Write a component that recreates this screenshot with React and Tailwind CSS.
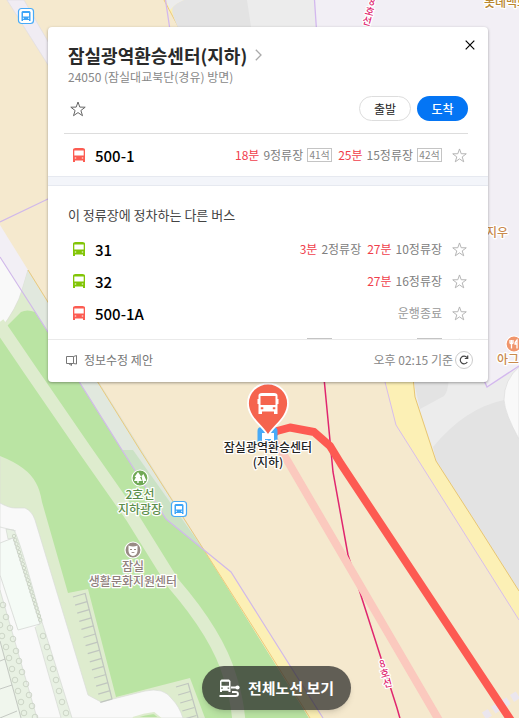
import React from "react";

function BusIcon({ className }) {
  return (
    <svg viewBox="0 0 12 14" className={className} fill="currentColor" aria-hidden="true">
      <path
        fillRule="evenodd"
        d="M2.500 0h7Q12 .4 12 1.500V14H10v-1.600H2V14H0V1.500Q0 .4 2.500 0ZM1.300 2.600V7.600h9.400V2.600ZM1.800 9.500v1.100h1.400V9.500Zm7 0v1.100h1.400V9.500Z"
      />
    </svg>
  );
}

function StarIcon({ className }) {
  return (
    <svg viewBox="0 0 16 16" className={className} fill="none" stroke="currentColor" aria-hidden="true">
      <path d="M8 1l1.800 5.100 5.400.1-4.300 3.300 1.600 5.200L8 11.600l-4.500 3.100 1.600-5.200L.8 6.200l5.400-.1z" />
    </svg>
  );
}

function SeatTag({ children }) {
  return (
    <span className="ml-1 flex h-[14px] w-[25px] items-center justify-center border border-[#c4c4c4] text-[10px] leading-3 text-[#888]">
      {children}
    </span>
  );
}

function Arrival({ time, stops, seats }) {
  return (
    <span className="ml-1.5 flex items-center">
      <span className="text-[#f0404c]">{time}</span>
      <span className="ml-1 text-[#808080]">{stops}</span>
      {seats && <SeatTag>{seats}</SeatTag>}
    </span>
  );
}

function BusRow({ name, color, arrivals, note }) {
  return (
    <li className="flex h-8 items-center pr-[21px] pl-[25px]">
      <BusIcon className={"h-[14px] w-3 " + color} />
      <a href="#bus" className="ml-2.5 pt-0.5 text-[15px] leading-5 font-medium text-black">
        {name}
      </a>
      <div className="ml-auto flex items-center text-xs leading-4">
        {arrivals && arrivals.map((a) => <Arrival key={a.time} {...a} />)}
        {note && <span className="text-[#999]">{note}</span>}
      </div>
      <button type="button" aria-label={name + " 즐겨찾기"} className="ml-2.5 text-[#b0b0b0]">
        <StarIcon className="size-[15px]" />
      </button>
    </li>
  );
}

const otherBuses = [
  {
    name: "31",
    color: "text-[#82c507]",
    arrivals: [
      { time: "3분", stops: "2정류장" },
      { time: "27분", stops: "10정류장" },
    ],
  },
  { name: "32", color: "text-[#82c507]", arrivals: [{ time: "27분", stops: "16정류장" }] },
  { name: "500-1A", color: "text-[#fc5c52]", note: "운행종료" },
];

const parkingTicks = Array.from({ length: 14 }, (_, i) => i);
const lowerTicks = [0, 1, 2, 3, 4];
const trees = [
  [43, 636], [47, 647], [50, 658], [53, 669], [56, 680], [59, 691], [62, 702], [66, 713],
  [3, 605], [6, 617], [10, 628], [13, 639], [16, 651], [19, 661], [22, 672], [26, 684], [29, 695], [32, 706], [35, 717],
  [0, 625], [2, 636], [6, 647], [9, 658], [12, 669], [15, 680], [18, 691], [21, 702], [24, 713],
];
const hedge = Array.from({ length: 22 }, (_, i) => i);

function StopBadge({ x, y }) {
  return (
    <g transform={`translate(${x} ${y})`}>
      <rect x="0.500" y="0.500" width="15" height="15" rx="3" fill="#fff" stroke="#47aaf7" strokeWidth="1.200" />
      <path
        fill="#3da4f7"
        fillRule="evenodd"
        d="M4.500 3h7l1 1v9H11v-1H5v1H3.500V4ZM5 5v3.500h6V5ZM4.800 9.800v1h1.200v-1Zm5.200 0v1h1.200v-1Z"
      />
    </g>
  );
}

function MapLabel({ x, y, fill, lines, size = 12, step = 15, anchor = "middle" }) {
  return (
    <text
      y={y}
      fill={fill}
      fontSize={size}
      fontWeight="500"
      textAnchor={anchor}
      stroke="#fff"
      strokeWidth="2.500"
      strokeLinejoin="round"
      paintOrder="stroke"
    >
      {lines.map((line, i) => (
        <tspan key={line} x={x} dy={i ? step : 0}>
          {line}
        </tspan>
      ))}
    </text>
  );
}

function MapCanvas() {
  return (
    <svg
      viewBox="0 0 519 718"
      preserveAspectRatio="xMidYMin slice"
      className="absolute inset-0 h-full w-full"
      role="img"
      aria-label="지도"
    >
      <rect width="519" height="718" fill="#f5e9ce" />
      {/* north-west road */}
      <path d="M7 0H24L50 45V68Z" fill="#f0ecf3" stroke="#dfdce2" strokeWidth="0.700" />
      {/* blocks along the north edge */}
      <path d="M164 0H190V30H180Z" fill="#fcf0b5" />
      <path d="M164 0L180 30" stroke="#ecca7c" />
      <path d="M166 0H316V40H183C176 22 170 12 173 7Q176 3 184 0Z" fill="#e3e3e3" />
      <path d="M166 0H184Q176 3 172 8L170 10Z" fill="#ececec" />
      <path d="M247 0H316V40H253Z" fill="#ececec" />
      <path d="M315 0H519V440H440V200L316 40Z" fill="#f2eff5" />
      <path d="M165.500 0L170 30M314.500 0L316.500 30" fill="none" stroke="#d3b8ee" strokeWidth="1.300" />

      {/* east blocks */}
      <path d="M413 378L415 397 436 461 519 591V367L487 387 480 370Z" fill="#ececec" />
      <path d="M449 378Q448 392 444 396L420 409 413 378Z" fill="#e3e3e3" />
      <path d="M433 447Q465 408 504 400Q505 414 519 439V595L474 523 436 461Z" fill="#e3e3e3" />
      <path d="M519 367Q504 380 504 400Q505 414 519 439Z" fill="#f9f9f9" stroke="#dcdcdc" strokeWidth="0.700" />
      <path d="M483 378L487 387 519 366" fill="none" stroke="#d3b8ee" strokeWidth="1.400" />
      <path d="M384 378L396 425 456 520 519 620V591L474 520 436 461 415 397 413 378Z" fill="#fcf0b5" />
      <path d="M384 378L396 425 456 520 519 620" fill="none" stroke="#d7bdec" />
      <path d="M413 378L415 397 436 461 474 520 519 591" fill="none" stroke="#e8c673" />

      {/* west park */}
      <path d="M0 225L28 270 20 300H0Z" fill="#f2eff5" />
      <path d="M0 257L22 290Q17 308 0 330Z" fill="#f9f9f9" />
      <path d="M22 290Q17 308 0 330V718H309L204 550 28 270Z" fill="#deecce" stroke="#d8dbd6" strokeWidth="0.600" />
      <path
        d="M0 337V456Q28 467 36 483Q40 490 42 502L68 593 88 589 116 697 190 678 205 718H309L204 550 166 519 122 450 48 332 35 312Q27 309 21 312L8 325Z"
        fill="#bae4a3"
      />
      <path d="M-2 323L30 370 85 450 132 517 173 583Q218 635 230 677Q237 698 239 722" fill="none" stroke="#deecce" strokeWidth="13" strokeLinejoin="round" />
      <path d="M28 270L140 450 204 550 166 519 122 450 22 291Z" fill="#e1e8de" />
      <path d="M122 450L166 519 204 550 133 450Z" fill="#cbe2c5" />
      <path d="M204 550L231 572 323 718H309Z" fill="#fcf0b5" />
      <path d="M28 270L140 450 204 550 260 638 310 718" fill="none" stroke="#ecca7c" />
      <path d="M0 257L48 332 122 450 166 519 204 550 231 572 260 618 323 718M0 222L50 198" fill="none" stroke="#d0b8ea" strokeWidth="1.200" />

      {/* south-west streets */}
      <path
        d="M0 503Q9 508 15 508H25Q32 511 35 520L88 695 101 702 145 691Q164 687 172 699Q179 706 183 718H0Z"
        fill="#f9f9f9"
        stroke="#dadcd8"
        strokeWidth="0.700"
      />
      <path d="M133 718Q144 714 154 713L160 718Z" fill="#bae4a3" stroke="#deecce" strokeWidth="2" />
      <path d="M0 590L37 718H0Z" fill="#e8f1e3" />
      <path d="M35 627L42 622 72 718H61Z" fill="#e8f1e3" />
      <path d="M6 529L14 530Q20 540 42 622L38 625 13 538 8 539Z" fill="#e8f1e3" stroke="#cfd5cc" strokeWidth="0.600" />
      <path d="M0 543L13 538 40 624 18 630 0 575Z" fill="#f5fbf6" stroke="#d5d8d4" strokeWidth="0.800" />
      <path d="M0 590L37 718M35 627L61 718M42 622L72 718M0 527L16 531" fill="none" stroke="#d5d8d4" strokeWidth="0.700" />
      <g fill="none" stroke="#c9d3c4" strokeWidth="0.900">
        {trees.map(([x, y]) => (
          <circle key={x + "-" + y} cx={x} cy={y} r="2.800" />
        ))}
        {hedge.map((i) => (
          <circle key={i} cx={14 + i * 1.25} cy={536 + i * 4} r="1.700" />
        ))}
      </g>
      <path d="M0 641L21 718H0Z" fill="#f0f6ed" />
      <path d="M0 641L21 718M0 661L5 659M0 689L12 685M0 718L17 711" fill="none" stroke="#b9bdb7" strokeWidth="0.800" />
      <g fill="none" stroke="#c0c6bf" strokeWidth="1.200">
        <path d="M85 593L112 699M188 683L198 718" />
        {parkingTicks.map((i) => (
          <path key={i} d={`M${73 + i * 2.1} ${597 + i * 8.1}l12 -3.500`} />
        ))}
        {lowerTicks.map((i) => (
          <path key={i} d={`M${176 + i * 2.1} ${687 + i * 8}l12 -3.500`} />
        ))}
      </g>

      {/* crossing, subway and bus lines */}
      <path d="M484 716L524 691" fill="none" stroke="#ebe6ee" strokeWidth="8" strokeDasharray="7 4" />
      <path d="M324 378L333 472 348 555 381 658 397 708 401 722" fill="none" stroke="#e0266f" strokeWidth="1.500" />
      <path d="M269 432L287 460 440 722" fill="none" stroke="#fbc9be" strokeWidth="8" />
      <path d="M268 437L277 431 290 427.500 314 432 330 446 341 464 512 722" fill="none" stroke="#fd5a52" strokeWidth="8" strokeLinejoin="round" />

      {/* transit stops */}
      <StopBadge x={18} y={8} />
      <StopBadge x={171} y={501} />
      <rect x="257.500" y="427" width="20" height="20" rx="4" fill="#47aaf7" />
      <path d="M262 442V433h12v9h-3v-3h-6v3Z" fill="#fff" />

      {/* selected stop pin */}
      <path
        d="M268 436C264 427 248 418 248 403.500a20 20 0 0 1 40 0C288 418 272 427 268 436Z"
        fill="#f5644e"
        stroke="#fff"
        strokeWidth="1.800"
      />
      <path
        fill="#fff"
        fillRule="evenodd"
        d="M262 393H274Q277.500 393 277.500 395.500V399h1v5h-1V414h-3.500V411.500h-12V414H258.500V404h-1v-5h1V395.500Q258.500 393 262 393ZM260.500 396V405h15V396ZM260.800 407.300v2h2.500v-2Zm12 0v2h2.500v-2Z"
      />
      <MapLabel x={268} y={452} fill="#222" lines={["잠실광역환승센터", "(지하)"]} />

      {/* places */}
      <circle cx="140" cy="478" r="8" fill="#6fa855" stroke="#fff" strokeWidth="1.200" />
      <path d="M138 472l3.500 5h-1.500l2 4h-3.300v2h-1.400v-2H134l2-4h-1.500ZM143.500 474l3 7h-2.300v2h-1.200v-2h-.5l-1-5Z" fill="#fff" />
      <MapLabel x={140} y={499} fill="#5c8f4b" lines={["2호선", "지하광장"]} />
      <circle cx="133" cy="550" r="8" fill="#988b84" stroke="#fff" strokeWidth="1.200" />
      <path
        fill="#fff"
        fillRule="evenodd"
        d="M128.500 545.500Q133 547.500 137.500 545.500V551Q137 555.500 133 556Q129 555.500 128.500 551ZM130 549v1h2v-1Zm4 0v1h2v-1Zm-3 3q2 2 4 0Z"
      />
      <MapLabel x={133} y={571} fill="#8f807c" lines={["잠실", "생활문화지원센터"]} />
      <MapLabel x={484} y={7} fill="#b98731" anchor="start" lines={["롯데백화점"]} />
      <MapLabel x={486} y={237} fill="#c98a4d" anchor="start" lines={["지우"]} />
      <circle cx="514" cy="344" r="8" fill="#f0956c" stroke="#fff" strokeWidth="1.200" />
      <path d="M510 340v3q1.500 1.500 3 0v-3M511.500 340v8.500M517 348.500V340q-2 2-2 4h2" fill="none" stroke="#fff" strokeWidth="1.300" />
      <MapLabel x={497} y={364} fill="#c98a4d" anchor="start" lines={["아그라"]} />
      <g transform="rotate(15 370 10)">
        <MapLabel x={370} y={5} fill="#e0266f" size={10} step={10} lines={["8", "호", "선"]} />
      </g>
      <g transform="rotate(-15 385 674)">
        <MapLabel x={385} y={667} fill="#e0266f" size={10} step={10} lines={["8", "호", "선"]} />
      </g>
    </svg>
  );
}

function StopCard() {
  return (
    <section className="relative mt-[27px] mr-[31px] ml-12 rounded bg-white shadow-[0_1px_3px_rgba(0,0,0,0.35)]">
      <header className="px-5 pt-4">
        <button type="button" aria-label="닫기" className="absolute top-3 right-3 flex size-3 items-center justify-center text-black">
          <svg viewBox="0 0 10 10" className="size-2.5" fill="none" stroke="currentColor" strokeWidth="1.200" aria-hidden="true">
            <path d="M0.700 0.700L9.300 9.300M9.300 0.700L0.700 9.300" />
          </svg>
        </button>
        <h1 className="text-[18px] leading-6 font-bold text-[#2a2a2a]">
          <a href="#stop" className="flex items-center gap-2">
            잠실광역환승센터(지하)
            <svg viewBox="0 0 7 12" className="h-3 w-[7px]" fill="none" stroke="#aaa" strokeWidth="1.300" aria-hidden="true">
              <path d="M0.800 0.800L6 6 0.800 11.200" />
            </svg>
          </a>
        </h1>
        <p className="text-xs leading-5 text-[#888]">24050 (잠실대교북단(경유) 방면)</p>
        <div className="mt-[9px] flex h-[25px] items-center">
          <button type="button" aria-label="정류장 즐겨찾기" className="ml-0.5 text-[#666]">
            <StarIcon className="size-4" />
          </button>
          <div className="ml-auto flex gap-1.5 text-xs">
            <button type="button" className="h-[25px] w-[52px] rounded-full border border-[#ddd] bg-white leading-4 text-[#222]">
              출발
            </button>
            <button type="button" className="h-[25px] w-[51px] rounded-full bg-[#0475f4] leading-4 font-medium text-white">
              도착
            </button>
          </div>
        </div>
      </header>
      <hr className="mt-3 mr-5 ml-4 border-[#ddd]" />
      <ul className="pt-[5px] pb-[5px]">
        <BusRow
          name="500-1"
          color="text-[#fc5c52]"
          arrivals={[
            { time: "18분", stops: "9정류장", seats: "41석" },
            { time: "25분", stops: "15정류장", seats: "42석" },
          ]}
        />
      </ul>
      <div className="h-2.5 border-y border-[#e6e9f0] bg-[#f3f5fa]" />
      <h2 className="px-5 pt-[19px] text-[13px] leading-5 text-[#444]">이 정류장에 정차하는 다른 버스</h2>
      <ul className="mt-2 h-[106px] overflow-hidden">
        {otherBuses.map((bus) => (
          <BusRow key={bus.name} {...bus} />
        ))}
        <li className="flex h-8 items-start justify-end pt-[9px] pr-[21px]">
          <SeatTag />
          <span className="w-[81px]" />
          <SeatTag />
          <StarIcon className="ml-2.5 size-[15px] text-[#b0b0b0]" />
        </li>
      </ul>
      <footer className="flex h-[43px] items-center border-t border-[#eaeaea] pr-[15px] pb-0.5 pl-[18px] text-xs leading-4 text-[#777]">
        <a href="#suggest" className="flex items-center gap-[7px]">
          <svg viewBox="0 0 11 11" className="size-[11px]" fill="none" stroke="#777" aria-hidden="true">
            <path d="M.5 1.500H7.500L10.500.5V9L7.500 8.500H.5ZM7.500 1.500V8.500M2.500 8.500H5.500V10.500Z" />
          </svg>
          정보수정 제안
        </a>
        <span className="ml-auto text-[#888]">오후 02:15 기준</span>
        <button type="button" aria-label="새로고침" className="ml-0.5 flex size-[18px] items-center justify-center rounded-full border border-[#ccc] text-[#444]">
          <svg viewBox="0 0 10 10" className="size-2.5" fill="none" stroke="currentColor" strokeWidth="1.200" aria-hidden="true">
            <path d="M8.300 7A3.800 3.800 0 1 1 8 2.600M8.700.6V3.500H5.800" />
          </svg>
        </button>
      </footer>
    </section>
  );
}

export default function App() {
  return (
    <main className="relative flex min-h-screen flex-col overflow-hidden bg-[#f5e9ce] font-['Noto_Sans_CJK_KR',sans-serif]">
      <MapCanvas />
      <StopCard />
      <div className="relative mt-auto mb-2 flex justify-center pl-[34px]">
        <button
          type="button"
          className="flex h-11 items-center gap-2 rounded-full bg-[#222]/70 px-[17px] text-[15px] leading-5 font-bold text-white shadow-md"
        >
          <svg viewBox="0 0 21 19" className="h-[19px] w-[21px]" fill="none" aria-hidden="true">
            <path
              fill="#fff"
              fillRule="evenodd"
              d="M2.500.5h7.500L11.500 2V13H9.500v-1.300H3V13H1V2ZM2.500 2.800V6.800h7.500V2.800ZM2.200 8.500v1.300h1.600V8.500Zm6.400 0v1.300h1.600V8.500Z"
            />
            <path d="M12 8.500H18M0.500 17H16.500Q19 17 19 15T16.500 13H13" stroke="#fff" strokeWidth="1.800" />
            <circle cx="18.500" cy="8.500" r="2.100" fill="#fff" />
          </svg>
          전체노선 보기
        </button>
      </div>
    </main>
  );
}
